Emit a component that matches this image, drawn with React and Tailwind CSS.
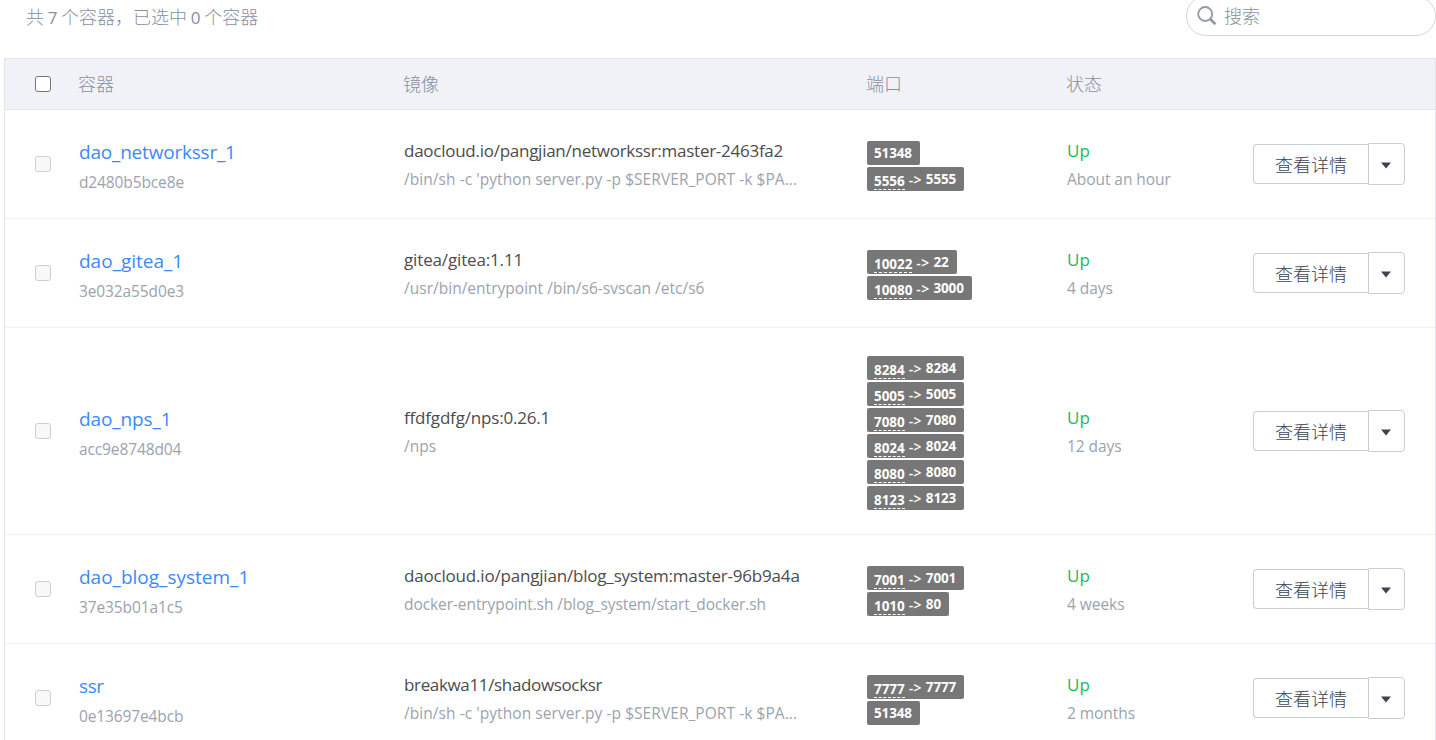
const rows = [
  {
    name: 'dao_networkssr_1', id: 'd2480b5bce8e', nameTrack: 'tracking-[-0.2px]',
    image: 'daocloud.io/pangjian/networkssr:master-2463fa2', imageTrack: 'tracking-[-0.26px]',
    command: "/bin/sh -c 'python server.py -p $SERVER_PORT -k $PA...", commandTrack: 'tracking-[0.06px]',
    ports: [{ to: '51348', w: 'w-[53px]' }, { from: '5556', to: '5555', w: 'w-[97px]' }],
    age: 'About an hour', height: 'h-[109px]',
  },
  {
    name: 'dao_gitea_1', id: '3e032a55d0e3', nameTrack: 'tracking-normal',
    image: 'gitea/gitea:1.11', imageTrack: 'tracking-[-0.15px]',
    command: '/usr/bin/entrypoint /bin/s6-svscan /etc/s6', commandTrack: 'tracking-[0.02px]',
    ports: [{ from: '10022', to: '22', w: 'w-[90px]' }, { from: '10080', to: '3000', w: 'w-[105px]' }],
    age: '4 days', height: 'h-[109px]',
  },
  {
    name: 'dao_nps_1', id: 'acc9e8748d04', nameTrack: 'tracking-[-0.1px]',
    image: 'ffdfgdfg/nps:0.26.1', imageTrack: 'tracking-[-0.18px]',
    command: '/nps', commandTrack: 'tracking-normal',
    ports: ['8284', '5005', '7080', '8024', '8080', '8123'].map((p) => ({ from: p, to: p, w: 'w-[97px]' })),
    age: '12 days', height: 'h-[207px]',
  },
  {
    name: 'dao_blog_system_1', id: '37e35b01a1c5', nameTrack: 'tracking-normal',
    image: 'daocloud.io/pangjian/blog_system:master-96b9a4a', imageTrack: 'tracking-[-0.19px]',
    command: 'docker-entrypoint.sh /blog_system/start_docker.sh', commandTrack: 'tracking-[-0.08px]',
    ports: [{ from: '7001', to: '7001', w: 'w-[97px]' }, { from: '1010', to: '80', w: 'w-[82px]' }],
    age: '4 weeks', height: 'h-[109px]',
  },
  {
    name: 'ssr', id: '0e13697e4bcb', nameTrack: 'tracking-[-0.4px]',
    image: 'breakwa11/shadowsocksr', imageTrack: 'tracking-[-0.35px]',
    command: "/bin/sh -c 'python server.py -p $SERVER_PORT -k $PA...", commandTrack: 'tracking-[0.06px]',
    ports: [{ from: '7777', to: '7777', w: 'w-[97px]' }, { to: '51348', w: 'w-[53px]' }],
    age: '2 months', height: 'h-[109px]',
  },
];

const columns = 'grid grid-cols-[74px_325px_463px_200px_186px_1fr]';

function Port({ from, to, w }) {
  return (
    <span className={`flex h-6 items-start rounded-[2px] bg-[#777777] pl-[7px] text-[13.5px] leading-[24px] font-bold text-white ${w}`}>
      {from && (
        <>
          <span className="mt-[5px] h-[18px] border-b border-dashed border-white leading-[19px] tracking-[-0.05px]">{from}</span>
          <span className="mr-[4px] ml-[4px] text-[14px] leading-[25px] font-semibold tracking-[0.3px]">-&gt;</span>
        </>
      )}
      <span className="tracking-[-0.15px]">{to}</span>
    </span>
  );
}

function Row({ row }) {
  return (
    <div className={`${columns} ${row.height} shrink-0 items-center border-b border-[#f1f2f4]`}>
      <div className="pl-[30px]">
        <div className="size-4 rounded-[3px] border border-[#cfcfcf] bg-[#f8f8f8]" />
      </div>
      <div className="pt-[6px] whitespace-nowrap">
        <div className={`text-[19px] leading-[30px] text-[#3d89f9] ${row.nameTrack}`}>{row.name}</div>
        <div className="text-[15.5px] leading-[30px] tracking-[-0.12px] text-[#9ba3af]">{row.id}</div>
      </div>
      <div className="pt-px whitespace-nowrap">
        <div className={`text-[17px] leading-[29px] text-[#4c4c4c] ${row.imageTrack}`}>{row.image}</div>
        <div className={`text-[15.5px] leading-[29px] text-[#9ba3af] ${row.commandTrack}`}>{row.command}</div>
      </div>
      <div className="flex flex-col items-start gap-[2px] pt-[3px]">
        {row.ports.map((p, i) => <Port key={i} {...p} />)}
      </div>
      <div className="pt-px whitespace-nowrap">
        <div className="text-[17px] leading-[29px] text-[#22b75e]">Up</div>
        <div className="text-[15.5px] leading-[29px] tracking-[-0.05px] text-[#9ba3af]">{row.age}</div>
      </div>
      <div className="flex items-center text-[#3d4351]">
        <button className="h-10 w-[115px] rounded-l-[4px] border border-r-0 border-[#c9cdd8] bg-white pt-px text-[18px] leading-[38px] font-light">查看详情</button>
        <button className="flex h-[42px] w-[37px] items-center justify-center rounded-r-[4px] rounded-l-[1px] border border-[#c9cdd8] bg-white pt-[3px] pr-px">
          <svg width="10" height="7" viewBox="0 0 10 7"><path d="M0 0.5H10L5 6.5Z" fill="currentColor" /></svg>
        </button>
      </div>
    </div>
  );
}

export default function App() {
  return (
    <div className="flex h-[740px] w-[1436px] flex-col overflow-hidden bg-white pl-1 font-['Open_Sans','Noto_Sans_CJK_SC',sans-serif]">
      <div className="flex h-[58px] shrink-0 items-start justify-between">
        <div className="pl-[22px] text-[18px] leading-[35px] font-light [word-spacing:-1px] text-[#8790a0]">
          共 <span className="text-[17px] font-normal">7</span> 个容器，已选中 <span className="text-[17px] font-normal">0</span> 个容器
        </div>
        <div className="-mt-1 flex h-10 w-[250px] items-center rounded-full border border-[#d0d4dd] pl-[10px]">
          <svg width="20" height="20" viewBox="0 0 20 20" fill="none" stroke="#9299a6">
            <circle cx="8.2" cy="8" r="7" strokeWidth="1.8" />
            <path d="M13 12.8L18.4 18.2" strokeWidth="2.8" />
          </svg>
          <span className="pl-[7px] text-[18px] leading-[38px] font-light text-[#8790a0]">搜索</span>
        </div>
      </div>
      <div className="flex flex-1 flex-col overflow-hidden border-x border-t border-[#e2e5ee]">
        <div className={`${columns} h-[51px] shrink-0 items-center border-b border-[#e3e5ea] bg-[#f1f2f7] text-[18px] font-light text-[#8790a0]`}>
          <div className="pl-[30px]">
            <div className="size-4 rounded-[3px] border border-[#767676] bg-white" />
          </div>
          <div className="-ml-px pt-px">容器</div>
          <div className="-ml-px pt-px">镜像</div>
          <div className="-ml-px pt-px">端口</div>
          <div className="-ml-px pt-px">状态</div>
        </div>
        {rows.map((row) => <Row key={row.name} row={row} />)}
      </div>
    </div>
  );
}
